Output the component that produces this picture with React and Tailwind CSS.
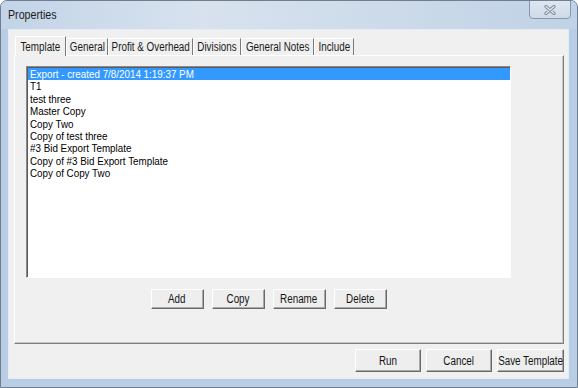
import React, { useState } from 'react';

const templates = [
  'Export - created 7/8/2014 1:19:37 PM',
  'T1',
  'test three',
  'Master Copy',
  'Copy Two',
  'Copy of test three',
  '#3 Bid Export Template',
  'Copy of #3 Bid Export Template',
  'Copy of Copy Two',
];

const tabs = [
  { label: 'Template', w: 'w-[51px]' },
  { label: 'General', w: 'w-[42px]' },
  { label: 'Profit & Overhead', w: 'w-[85px]' },
  { label: 'Divisions', w: 'w-[48px]' },
  { label: 'General Notes', w: 'w-[73px]' },
  { label: 'Include', w: 'w-[40px]' },
];

// the shot is squeezed sideways, so text is narrowed to match
function Narrow({ children, left }) {
  return (
    <span
      className={
        'inline-block whitespace-nowrap scale-x-[0.82] ' + (left ? 'origin-left' : 'origin-center')
      }
    >
      {children}
    </span>
  );
}

function WinButton({ children, className }) {
  return (
    <button
      className={
        'flex items-center justify-center bg-[#eeeeee] text-[12px] text-[#151515] leading-none whitespace-nowrap border border-t-white border-l-white border-r-[#6a6a6a] border-b-[#6a6a6a] shadow-[inset_-1px_-1px_0_#a8a8a8] ' +
        className
      }
    >
      <Narrow>{children}</Narrow>
    </button>
  );
}

export default function App() {
  const [selected, setSelected] = useState(0);
  const [tab, setTab] = useState(0);

  return (
    <div className="w-[578px] h-[388px] font-['Liberation_Sans',Arial,sans-serif]">
      <div className="w-full h-full flex flex-col bg-[#b9cde4] border border-[#6f7e91] rounded-t-[7px] overflow-hidden">
        {/* title bar */}
        <div className="h-[28px] flex items-start justify-between bg-[linear-gradient(90deg,#c3d4e8_0%,#d7e2ee_35%,#cfdcea_60%,#c0d2e7_100%)]">
          <span className="pl-[7px] pt-[7px] text-[13px] text-[#1c1c1c] leading-none">
            <Narrow left>Properties</Narrow>
          </span>
          <div className="mr-[6px] -mt-[1px] w-[42px] h-[19px] flex items-center justify-center bg-[linear-gradient(180deg,#dde6f1,#cfdbe9)] border border-[#8797ac] rounded-b-[4px]">
            <svg width="12" height="10" viewBox="0 0 12 10">
              <path d="M2 1.5 L10 8.5 M10 1.5 L2 8.5" stroke="#7c8797" strokeWidth="3.2" strokeLinecap="round" />
              <path d="M2 1.5 L10 8.5 M10 1.5 L2 8.5" stroke="#e9eef4" strokeWidth="1.2" strokeLinecap="round" />
            </svg>
          </div>
        </div>

        {/* client area */}
        <div className="flex-1 ml-[7px] mr-[8px] mb-[8px] bg-[#f0f0f0] border border-[#e4ecf5] flex flex-col">
          <div className="pl-[5px] pr-[4px] pt-[6px]">
            {/* tab strip */}
            <div className="h-[19px] flex items-end pl-[1px]">
              {tabs.map((t, i) =>
                i === tab ? (
                  <div
                    key={t.label}
                    onClick={() => setTab(i)}
                    className={`${t.w} h-[20px] -mb-[1px] relative z-10 bg-[#f0f0f0] border-t border-l border-white border-r border-r-[#7a7a7a] flex items-center justify-center text-[12px] text-[#1a1a1a] leading-none cursor-default`}
                  >
                    <Narrow>{t.label}</Narrow>
                  </div>
                ) : (
                  <div
                    key={t.label}
                    onClick={() => setTab(i)}
                    className={`${t.w} h-[17px] border-t border-l border-white border-r border-r-[#7a7a7a] flex items-center justify-center text-[12px] text-[#1a1a1a] leading-none cursor-default`}
                  >
                    <Narrow>{t.label}</Narrow>
                  </div>
                )
              )}
            </div>

            {/* tab panel */}
            <div className="h-[289px] border border-t-white border-l-white border-r-[#7d7d7d] border-b-[#7d7d7d] shadow-[inset_-1px_-1px_0_#c8c8c8]">
              <div className="mt-[10px] ml-[11px] w-[485px] h-[212px] bg-white border border-t-[#8a8a8a] border-l-[#8a8a8a] border-r-white border-b-white shadow-[inset_1px_1px_0_#5a5a5a]">
                <div className="pt-[1px] pl-[1px]">
                  {templates.map((name, i) => (
                    <div
                      key={name}
                      onClick={() => setSelected(i)}
                      className={
                        'h-[12.4px] pl-[2px] text-[10.8px] leading-[12.4px] whitespace-nowrap cursor-default ' +
                        (selected === i ? 'bg-[#3399ff] text-white' : 'text-black')
                      }
                    >
                      <span className="inline-block whitespace-nowrap scale-x-[0.91] origin-left">{name}</span>
                    </div>
                  ))}
                </div>
              </div>

              <div className="mt-[11px] ml-[11px] w-[485px] flex justify-center gap-[8px]">
                <WinButton className="w-[53px] h-[20px]">Add</WinButton>
                <WinButton className="w-[53px] h-[20px]">Copy</WinButton>
                <WinButton className="w-[53px] h-[20px]">Rename</WinButton>
                <WinButton className="w-[53px] h-[20px]">Delete</WinButton>
              </div>
            </div>
          </div>

          {/* dialog buttons */}
          <div className="flex justify-end gap-[5px] pt-[5px] pr-[4px]">
            <WinButton className="w-[66px] h-[23px]">Run</WinButton>
            <WinButton className="w-[66px] h-[23px]">Cancel</WinButton>
            <WinButton className="w-[67px] h-[23px]">Save Template</WinButton>
          </div>
        </div>
      </div>
    </div>
  );
}
